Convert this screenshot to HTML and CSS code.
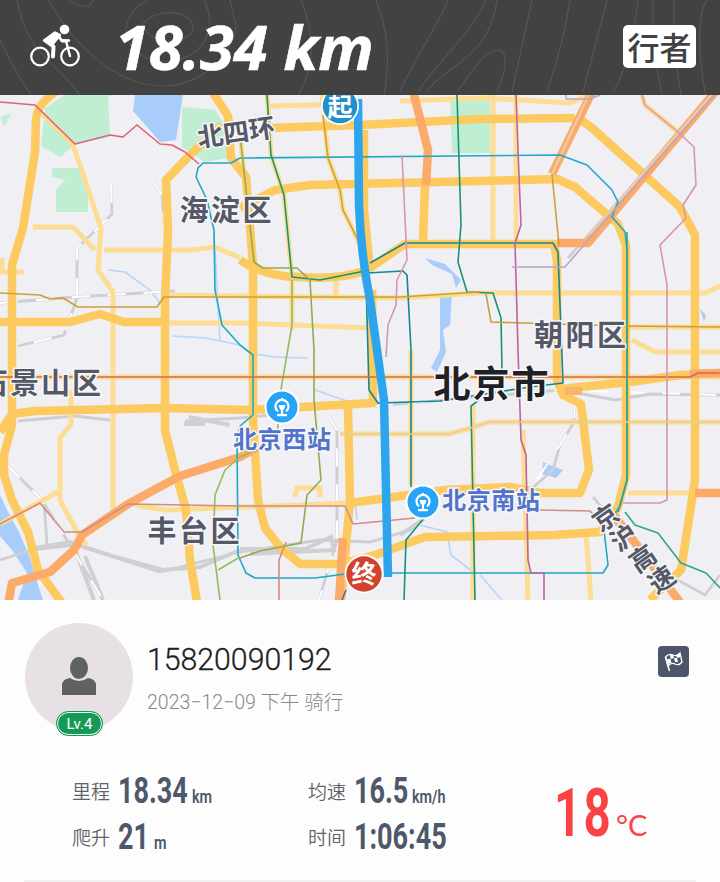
FILE: index.html
```html
<!DOCTYPE html>
<html lang="zh-CN">
<head>
<meta charset="utf-8">
<title>骑行记录</title>
<link rel="stylesheet" href="styles.css">
</head>
<body>
<main class="share">
  <header class="top">
    <svg class="contours" viewBox="0 0 720 95" aria-hidden="true">
      <path d="M0 40Q14 70 31 95M17 0C27 55 55 60 80 95M48 0C70 38 108 83 160 86C205 87 235 50 236 25L230 0M69 0Q80 9 90 5L94 0M148 0C110 20 125 60 165 62C205 59 218 28 204 0M142 25C156 7 188 10 193 25C195 45 151 48 142 25M301 0Q323 55 298 95M376 0C389 34 390 62 384 95M448 0C435 32 410 65 400 92M486 0C470 36 436 63 418 92M497 0C490 57 450 62 426 92M457 92C475 67 485 50 498 50C510 50 505 75 497 92M532 0L512 92M570 0Q563 45 547 92M607 0L583 92M638 0Q630 65 613 92M653 0Q652 50 662 95M674 0Q673 55 681 95M707 0C695 18 700 70 706 95"/>
    </svg>
    <svg class="bike" viewBox="28 22 54 46" role="img" aria-label="骑行">
      <g fill="none" stroke="#fff" stroke-linecap="round" stroke-linejoin="round">
        <circle cx="40" cy="56.500" r="8.800" stroke-width="2.200"/><circle cx="70" cy="56.500" r="8.800" stroke-width="2.200"/>
        <path d="M63 40.500H69M66 41L70 56" stroke-width="2.400"/>
        <path d="M46 41L53.500 46.500L53 56.500" stroke-width="4"/>
        <path d="M57 34L62 41L67 41" stroke-width="3"/>
        <path d="M44 40.500L55 32.500L60 35L52 45Z" fill="#fff" stroke-width="2.500"/>
      </g>
      <circle cx="64.500" cy="29.500" r="4.800" fill="#fff"/>
    </svg>
    <h1 class="title"><span>18.34 km</span></h1>
    <div class="brand"><span>行者</span></div>
  </header>

  <svg class="map" viewBox="0 95 720 505" role="img" aria-label="骑行轨迹地图">
    <rect y="95" width="720" height="505" fill="#efeff4"/>
    <g fill="#bfeed2">
      <path d="M45 108L65 95H108L110 137L75 144L60 157L41 146Z"/>
      <path d="M52 168H81V172L88 186V212H56V190L65 180L52 177Z"/>
      <path d="M182 107L215 110L228 130V158L205 162L182 147Z"/>
      <path d="M450 97H490V153H452Z"/><path d="M88 95H112L95 102ZM0 117L12 113L4 126Z"/>
    </g>
    <g fill="#a9cdfb">
      <path d="M135 95H183L176 140L160 142L148 128L133 111Z"/>
      <path d="M0 495L8 512L18 530L29 555L38 585L43 600H18L27 573L12 550L0 536Z"/>
      <path d="M440 298L452 294L450 325L443 330L446 352L437 372L431 368L440 350Z"/>
      <path d="M425 258L445 264L461 280L456 288L452 274L432 265ZM543 462L552 466L563 470L556 478L542 474ZM700 309L706 315L704 322Z"/>
    </g>
    <g class="stream"><path d="M108 270L125 272L150 290L160 303M172 336L205 338L240 345M214 232L220 340M255 354L275 357L308 358M315 390L350 402M355 503L357 520M420 525L447 532L451 555L473 572M480 575L502 600"/></g>

    <g class="rail-bed">
      <path d="M111 185L112 214L96 230L77 248V298L64 335L18 346M152 180L162 195L164 225"/>
      <path d="M0 303L75 297L175 291"/>
      <path d="M7 465L42 500L70 545L103 600M44 502L47 545L0 560"/>
      <path d="M30 550L75 545L110 556L160 572L240 552L320 540L370 542L410 530L424 518"/>
      <path d="M18 421L75 416L110 420M185 421L240 418L270 415"/>
      <path d="M328 415L337 430V540L319 600"/>
      <path d="M375 406L560 390L615 400L650 394L720 395"/>
      <path d="M575 400L574 422L560 445L553 470L530 490"/>
      <path d="M593 497L650 565L705 595L720 575M568 258L712 95"/>
    </g>
    <path d="M35 548L70 542L112 556L163 570L200 567L240 550M76 552L94 600M85 556L103 600M240 549L305 549L331 537L334 550L250 554M400 535L424 519M189 417L230 425M184 424L205 424" fill="none" stroke="#cfcfd4" stroke-width="4"/>
    <g class="rail-dash">
      <path d="M111 185L112 214L96 230L77 248V298L64 335L18 346M152 180L162 195L164 225"/>
      <path d="M0 303L75 297L175 291M7 465L42 500L70 545L103 600"/>
      <path d="M328 415L337 430V540L319 600M375 406L560 390L720 395"/>
      <path d="M575 400L574 422L560 445L530 490"/>
    </g>

    <g class="road pale">
      <path d="M33 227H73L95 250M104 250H190L215 247L240 258"/>
      <path d="M0 272H24M2 258V272"/>
      <path d="M165 295L400 298L480 293L705 293L720 286"/>
      <path d="M165 323H240L370 328"/>
      <path d="M0 377H720"/>
      <path d="M270 106L360 104M400 101L485 98L570 103L590 95"/>
      <path d="M493 95V240M516 95V240M336 280V297"/>
      <path d="M40 112L72 143L80 165L101 228L98 270L113 292V512"/>
      <path d="M71 390V424L60 438V500L76 530L86 545"/>
      <path d="M0 524L58 492"/>
      <path d="M632 340L655 352H720M627 327H720"/>
      <path d="M340 434H450L490 422H720"/>
      <path d="M628 493H720M523 430L528 600M586 535L591 600"/>
      <path d="M267 95L271 155L284 195L292 277V330M240 135L254 262M473 405V600"/>
      <path d="M322 95L328 158L340 190L343 210L360 245L366 275"/>
      <path d="M295 497L297 488H320V497"/>
      <path d="M135 505L165 510L350 503"/>
      <path d="M411 350V485"/>
      <path d="M642 95L645 105L678 132"/>
    </g>
    <g class="road major">
      <path d="M56 91C42 102 37 108 36 120L35 152L23 228L12 265V425L4 455V475L12 500L28 532L38 570L62 603"/>
      <path d="M222 125L190 155L166 180L168 230L165 300V430L175 470L186 510L190 560L197 602"/>
      <path d="M212 91L228 116L231 158L246 177L253 265V420L258 500L265 528L280 547L300 564H340"/>
      <path d="M0 322H70L100 314L124 322H166"/>
      <path d="M0 432L12 414L35 411L165 408L250 410L373 403L372 290"/>
      <path d="M268 128L360 125L480 119L575 118"/>
      <path d="M240 208L275 190L310 185L480 181L557 179L575 187L618 224L626 245V475L618 507L600 532L555 535L425 537L375 555L345 563"/>
      <path d="M577 117L592 128L680 207L695 235V480L681 570L650 600"/>
      <path d="M240 260Q265 277 300 277Q340 280 367 270L405 244H554L557 260V380L563 395L581 404L589 470L580 493L540 493L510 487L445 490L350 503"/>
      <path d="M425 185L423 240M348 408L350 500L341 602"/>
      <path d="M364 130V210L370 270"/>
      <path d="M560 389L630 382L680 375L720 373"/>
    </g>
    <g class="road orange">
      <path d="M8 605L12 583L50 572L74 550L82 535L128 504L180 476L240 457L258 447"/>
      <path d="M413 91L428 150L426 185M592 92L552 174M716 91L588 243H557"/>
      <path d="M343 538L339 602M695 493H720M614 515L680 602M690 374L720 373"/>
    </g>
    <path d="M565 391H582" stroke="#f6b66a" stroke-width="8"/>
    <path d="M714 92L590 234M590 92L552 174" fill="none" stroke="#e9cdb4" stroke-width="2"/>

    <g class="line">
      <path class="red" d="M0 102L35 105L75 144L110 135L123 137L137 125L160 144L172 145L185 152L199 164"/>
      <path class="cyan" d="M240 158L560 155L587 165L612 190L618 202L612 217L625 232L627 250V480L620 506L604 530L608 565L603 573L385 573M345 574L315 578H255L246 573L238 555L237 440L240 426L253 415V355L240 345L222 325L215 290L214 230L207 200L196 177L198 168L203 163H231L240 158"/>
      <path class="green" d="M627 232V480L618 512"/>
      <path class="teal" d="M367 273L403 271L407 275L411 350L411 487M366 280L369 390L378 403L440 401L530 387L563 383L558 252L553 243H405L370 263"/>
      <path class="dark-green" d="M267 95L271 155L284 195L292 277L320 280L365 271"/>
      <path class="dark-green" d="M457 95L461 225L458 262L467 292L493 293L501 318L502 370M479 400L471 406L475 600M424 518L406 540L404 600"/>
      <path class="green" d="M625 512L635 525L658 533L681 563L706 573L720 588"/>
      <path class="olive" d="M240 135L254 262L263 268H297L310 280L314 350L314 400L321 480L307 495L301 543L260 551L240 558"/>
      <path class="lime" d="M292 280V325L280 395L277 440L240 457L225 470L215 495L213 545L220 600M218 570L240 557"/>
      <path class="gold" d="M0 293L40 295L50 299L63 298L78 307H157L164 297H400L480 292M486 294L491 322L620 326L720 327M552 174L559 245M323 115L328 158L340 190L343 210L358 240"/>
      <path class="brick" d="M0 377H690L698 373H720"/>
      <path class="brown" d="M0 524L40 503L64 532L82 532L128 504L240 506H345L353 524L415 518M540 510L590 511L604 525M286 542L279 560V600"/>
      <path class="pink" d="M402 155L407 260L397 280L396 305L388 325L386 357M642 95L645 105L678 132L694 147L696 185L683 205L686 218L660 245L667 285V500L660 503H623"/>
      <path class="magenta" d="M516 95L518 150L521 225L515 243L518 350L521 440L526 455L528 560L531 573H544V600"/>
      <path class="violet" d="M714 95L565 267H512M566 95V99H590L600 95"/>
      <path class="pale-line" d="M340 434H450L490 422H720"/>
      <path class="blue" d="M346 590L342 600"/>
    </g>
    <path d="M358 99L359 205Q361 255 370 300L384 400L388 577" fill="none" stroke="#2da5ed" stroke-width="8.500"/>

    <g class="district">
      <text x="225.500" y="221" textLength="92">海淀区</text>
      <text x="580" y="346" textLength="92">朝阳区</text>
      <text x="193.500" y="542" textLength="92">丰台区</text>
      <text x="40" y="394" textLength="122">石景山区</text>
      <text transform="rotate(-8 236 132)" x="236" y="142" textLength="78" class="small">北四环</text>
      <g class="small">
        <text transform="translate(606 518) rotate(-35)" y="9">京</text>
        <text transform="translate(624 538) rotate(-35)" y="9">沪</text>
        <text transform="translate(643 559) rotate(-35)" y="9">高</text>
        <text transform="translate(662 580) rotate(-35)" y="9">速</text>
      </g>
    </g>
    <text class="city" x="491" y="398" textLength="115">北京市</text>
    <g class="station">
      <text x="282" y="448" textLength="98">北京西站</text>
      <text x="491" y="509" textLength="98">北京南站</text>
    </g>
    <defs>
      <g id="rail-stop">
        <circle r="17.500" fill="#fff"/><circle r="15.500" fill="#27a3f8"/>
        <path d="M-4 4.500A6.500 6.500 0 1 1 4 4.500M0 -9V-6M-3 -1H3M0 0V7M-5 8.200H5" fill="none" stroke="#fff" stroke-width="2.200"/>
        <path d="M-3.500 -1.500H3.500L2 2.500H-2Z" fill="#fff"/>
      </g>
    </defs>
    <use href="#rail-stop" x="282" y="407"/>
    <use href="#rail-stop" x="423" y="502"/>
    <g class="pin">
      <circle cx="340" cy="106" r="19" fill="#fff"/><circle cx="340" cy="106" r="17.300" fill="#218fc9"/><text x="340" y="116">起</text>
      <circle cx="364" cy="574" r="19.500" fill="#fff"/><circle cx="364" cy="574" r="17.700" fill="#d0432c"/><text x="364" y="583">终</text>
    </g>
  </svg>

  <section class="rider">
    <div class="avatar">
      <svg viewBox="0 0 34 38" aria-hidden="true"><ellipse cx="17" cy="11" rx="9" ry="11"/><path d="M0 38V27Q1 22 8 21Q17 27 26 21Q33 22 34 27V38Z"/></svg>
      <span class="level"><span>Lv.4</span></span>
    </div>
    <div class="who">
      <div class="name"><span>15820090192</span></div>
      <div class="date"><span>2023−12−09 下午 骑行</span></div>
    </div>
    <div class="flag">
      <svg viewBox="0 0 31 31" aria-hidden="true"><path d="M7.500 11L11.500 25" fill="none" stroke="#fff" stroke-width="1.500"/><path d="M7.500 11Q11 7 15 9T22 7L24 16Q21 20 17 18T10 20Z" fill="none" stroke="#fff" stroke-width="1.300"/><path d="M12 9L15 9L16 12L12.500 13ZM18 9L22 8L22.500 11L19 12ZM9 13L12.500 13L13.500 17L10 18ZM16 12L19 12L20 16L17 16Z" fill="#fff"/></svg>
    </div>
  </section>

  <section class="stats">
    <div class="metric"><span class="label">里程</span><span class="value w-distance"><b>18.34</b></span><span class="unit"><b>km</b></span></div>
    <div class="metric"><span class="label">均速</span><span class="value w-speed"><b>16.5</b></span><span class="unit"><b>km/h</b></span></div>
    <div class="metric"><span class="label">爬升</span><span class="value w-climb"><b>21</b></span><span class="unit"><b>m</b></span></div>
    <div class="metric"><span class="label">时间</span><span class="value w-time"><b>1:06:45</b></span></div>
    <div class="temp"><span class="degrees"><b>18</b></span><span class="celsius">°C</span></div>
  </section>
</main>
</body>
</html>
```
FILE: styles.css
```css
* { box-sizing: border-box; }
body { margin: 0; background: #fff; font-family: Roboto, "Noto Sans CJK SC", sans-serif; }
.share { width: 720px; height: 882px; overflow: hidden; background: #fdfdfd; }

.top { position: relative; display: flex; align-items: center; height: 95px; padding: 0 24px 0 28px; background: #424242; }
.contours { position: absolute; inset: 0; width: 720px; height: 95px; fill: none; stroke: #555; stroke-width: 1.2; }
.bike { position: relative; width: 54px; height: 46px; margin-top: -5px; }
.title { position: relative; width: 260px; margin: -3px 0 0 33px; font: italic 700 61px/95px "Open Sans", sans-serif; color: #fff; white-space: nowrap; }
.title span { display: inline-block; transform: scaleX(1.005); transform-origin: left; -webkit-text-stroke: 0.6px #fff; }
.brand { position: relative; width: 73px; height: 43px; margin-left: auto; margin-top: -2px; border-radius: 5px; background: #fff; color: #424242; font: 500 32px/42px "Noto Sans CJK SC", sans-serif; text-align: center; }

.map { display: block; width: 720px; height: 505px; }
.map text { text-anchor: middle; font-family: "Noto Sans CJK SC", sans-serif; font-weight: 700; paint-order: stroke; stroke: #f7f7fa; stroke-width: 3px; stroke-linejoin: round; }
.district { fill: #555967; font-size: 29px; }
.district .small { font-size: 26px; }
.map .city { fill: #202124; font-size: 37px; }
.station { fill: #5273cc; font-size: 24px; }
.map .pin text { fill: #fff; stroke: none; font-size: 25px; }
.stream { fill: none; stroke: #b9d5f8; stroke-width: 1.6; }
.rail-bed { fill: none; stroke: #cfced4; stroke-width: 2.8; }
.rail-dash { fill: none; stroke: #fff; stroke-width: 2; stroke-dasharray: 18 18; }
.road { fill: none; stroke-linejoin: round; }
.pale { stroke: #fddd93; stroke-width: 5; }
.major { stroke: #fdca60; stroke-width: 8.5; }
.orange { stroke: #fcaa68; stroke-width: 8.5; }
.line { fill: none; stroke-width: 1.6; stroke-linejoin: round; }
.red { stroke: #dc647b; }
.cyan { stroke: #20a8c5; }
.green { stroke: #2fa686; }
.teal { stroke: #148790; }
.dark-green { stroke: #199278; }
.olive { stroke: #90aa50; }
.lime { stroke: #92bd5c; }
.gold { stroke: #cda037; }
.brick { stroke: #cf6a54; }
.brown { stroke: #d28d82; }
.pink { stroke: #d697ac; }
.magenta { stroke: #bd63a1; }
.violet { stroke: #b8a7c5; }
.pale-line { stroke: #e0cda9; }
.blue { stroke: #4b68b2; }

.rider { display: flex; height: 150px; padding: 23px 31px 0 25px; }
.avatar { position: relative; display: flex; justify-content: center; width: 108px; height: 108px; padding-top: 34px; border-radius: 50%; background: #e7e1e5; }
.avatar svg { width: 34px; height: 38px; fill: #606162; }
.level { position: absolute; left: 31px; top: 88px; width: 47px; height: 25px; border: 1px solid #169956; border-radius: 13px; background: #169956; box-shadow: inset 0 0 0 1px #e8fff2; color: #fff; font-size: 15px; line-height: 24px; text-align: center; }
.who { margin-left: 14px; padding-top: 18px; white-space: nowrap; }
.name { height: 36px; font: 300 32px/36px Roboto, sans-serif; color: #202020; }
.name span, .date span { display: inline-block; transform-origin: left; }
.name span { transform: scaleX(.945); -webkit-text-stroke: 0.3px #202020; }
.date { height: 24px; margin-top: 14px; font: 300 19.500px/24px Roboto, "Noto Sans CJK SC", sans-serif; color: #888; }
.flag { width: 31px; height: 31px; margin-left: auto; margin-top: 23px; border-radius: 4px; background: #4c556a; }
.flag svg { display: block; }

.stats { display: grid; grid-template-columns: 236px 246px 118px; grid-template-rows: 46px 46px; height: 132px; margin: 0 24px; padding: 18px 0 0 48px; border-bottom: 2px solid #f0f0f0; }
.metric { display: flex; height: 46px; white-space: nowrap; color: #4e586b; }
.label { width: 46px; color: #606468; font: 350 19px/46px "Noto Sans CJK SC", sans-serif; }
.value { font-size: 37px; line-height: 46px; }
.value b, .unit b, .degrees b { display: inline-block; transform-origin: left; }
.value b { transform: scaleX(.73); }
.w-distance { width: 74px; }
.w-speed { width: 58px; }
.w-climb { width: 36px; }
.w-time { width: 94px; }
.unit { font-size: 18px; line-height: 58px; }
.unit b { font-weight: 600; transform: scaleX(.8); }
.temp { grid-column: 3; grid-row: 1 / 3; display: flex; align-items: baseline; height: 92px; color: #f94345; white-space: nowrap; }
.degrees { width: 62px; font-size: 66px; line-height: 92px; }
.degrees b { transform: scaleX(.72); letter-spacing: 3px; }
.celsius { font: 400 29px/1 Lato, sans-serif; }
```
